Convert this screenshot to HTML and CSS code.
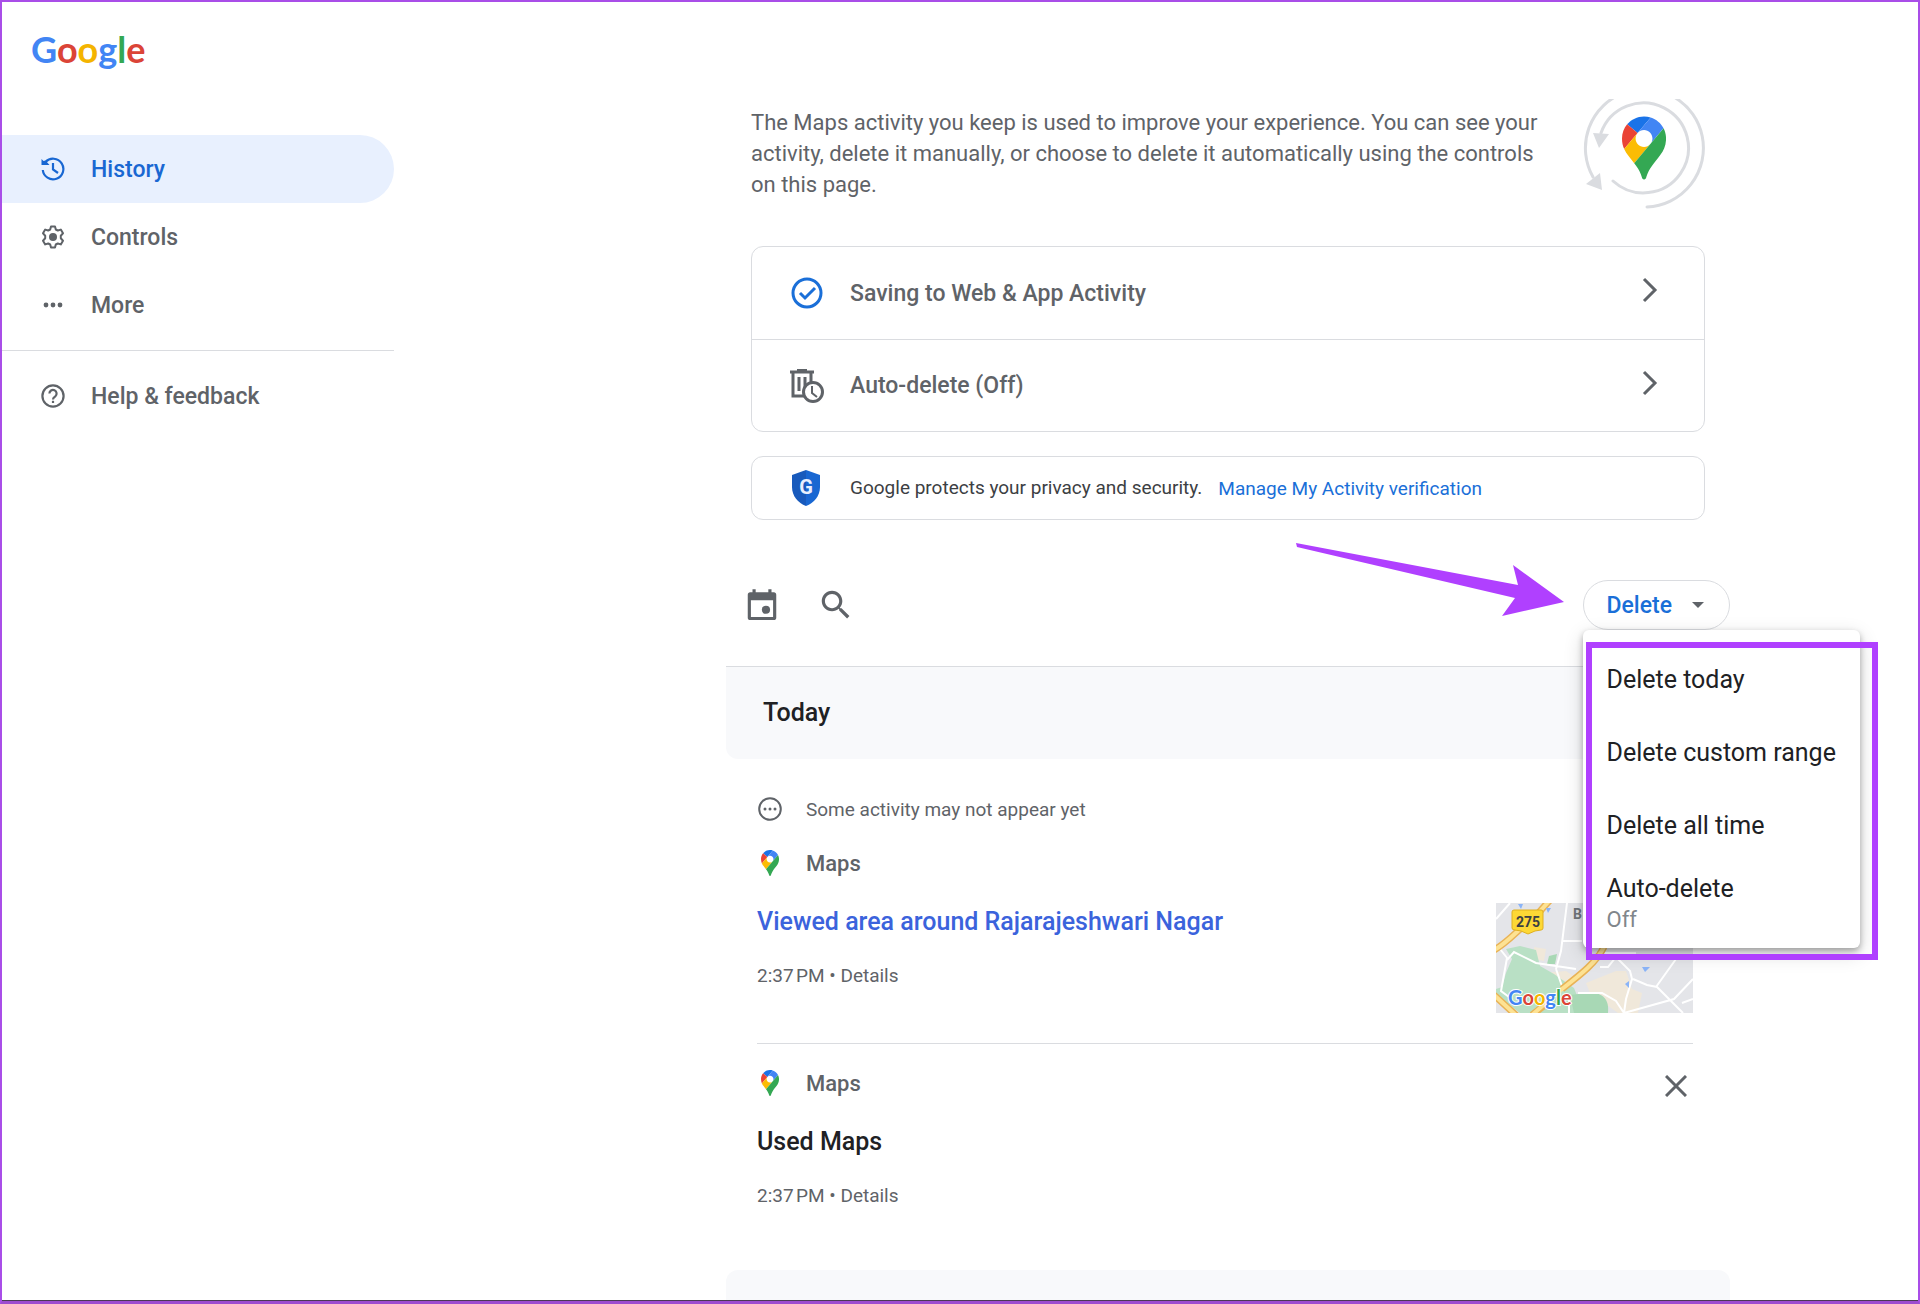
FILE: index.html
```html
<!DOCTYPE html>
<html lang="en">
<head>
  <meta charset="UTF-8">
  <meta name="viewport" content="width=device-width, initial-scale=1">
  <title>Maps activity</title>
  <link rel="stylesheet" href="styles.css">
</head>
<body>
  <!-- shared symbols -->
  <svg class="hidden">
    <symbol id="pin" viewBox="0 0 92.3 132.3">
      <path fill="#1a73e8" d="M60.2 2.2C55.8.8 51 0 46.1 0 32 0 19.3 6.4 10.8 16.5l21.8 18.3L60.2 2.2z"/>
      <path fill="#ea4335" d="M10.8 16.5C4.1 24.5 0 34.9 0 46.1c0 8.7 1.7 15.7 4.6 22l28-33.3-21.8-18.3z"/>
      <path fill="#4285f4" d="M46.2 28.5c9.8 0 17.7 7.9 17.7 17.7 0 4.3-1.6 8.3-4.2 11.4 0 0 13.9-16.6 27.5-32.7-5.6-10.8-15.3-19-27-22.7L32.6 34.8c3.3-3.8 8.1-6.3 13.6-6.3"/>
      <path fill="#fbbc04" d="M46.2 63.8c-9.8 0-17.7-7.9-17.7-17.7 0-4.3 1.5-8.3 4.1-11.3l-28 33.3c4.8 10.6 12.8 19.2 21 29.9l34.1-40.5c-3.3 3.9-8.1 6.3-13.5 6.3"/>
      <path fill="#34a853" d="M59.1 109.2c15.4-24.1 33.3-35 33.3-63 0-7.7-1.9-14.9-5.2-21.3L25.6 98c2.6 3.4 5.3 7.3 7.9 11.3 9.4 14.5 6.8 23.1 12.8 23.1s3.4-8.7 12.8-23.2"/>
    </symbol>
    <symbol id="chevron" viewBox="0 0 16 26">
      <path d="M2 2l11 11L2 24" fill="none" stroke="#5f6368" stroke-width="3"/>
    </symbol>
  </svg>

  <div class="app">
    <aside class="sidebar">
      <a class="logo" href="#" aria-label="Google"><span class="blue">G</span><span class="red">o</span><span class="yellow">o</span><span class="blue">g</span><span class="green">l</span><span class="red">e</span></a>
      <nav>
        <a class="nav-item active" href="#">
          <svg class="nav-icon" viewBox="0 0 24 24" fill="none" stroke="currentColor" stroke-width="2.2">
            <path d="M1.8 13a10.3 10.3 0 1 0 2.7-8L3 6.500"/>
            <path d="M.5 2l2 2 2-.5 4 4.500H.5z" fill="currentColor" stroke="none"/>
            <path d="M12 6v6.500l5 3.500"/>
          </svg>
          History
        </a>
        <a class="nav-item" href="#">
          <svg class="nav-icon" viewBox="0 0 24 24">
            <path fill="none" stroke="currentColor" stroke-width="2" stroke-linejoin="round" d="M10 1.500h4l.8 3 2 1 3-.9 2.200 3.700-2.200 2.400v2.600l2.200 2.400-2.200 3.700-3-.9-2 1-.8 3h-4l-.8-3-2-1-3 .9L2 15.700l2.200-2.400v-2.600L2 8.300l2.200-3.700 3 .9 2-1z"/>
            <circle cx="12" cy="12" r="4" fill="currentColor"/>
          </svg>
          Controls
        </a>
        <a class="nav-item" href="#">
          <svg class="nav-icon" viewBox="0 0 24 24" fill="currentColor">
            <circle cx="5" cy="12" r="2.400"/><circle cx="12" cy="12" r="2.400"/><circle cx="19" cy="12" r="2.400"/>
          </svg>
          More
        </a>
        <hr>
        <a class="nav-item" href="#">
          <svg class="nav-icon" viewBox="0 0 24 24" fill="none" stroke="currentColor" stroke-width="2.200">
            <circle cx="12" cy="12" r="10.600"/>
            <path d="M8.400 9.600a3.600 3.600 0 1 1 5.900 2.700c-1.300 1-2.300 1.600-2.300 3.200"/>
            <path d="M12 16.800v2.200"/>
          </svg>
          Help &amp; feedback
        </a>
      </nav>
    </aside>

    <main class="content">
      <div class="column">
        <section class="intro">
          <p>The Maps activity you keep is used to improve your experience. You can see your activity, delete it manually, or choose to delete it automatically using the controls on this page.</p>
          <svg class="intro-art" viewBox="0 0 122 110">
            <g fill="none" stroke="#dadce0" stroke-width="3" stroke-linecap="round">
              <path d="M64 108A59 59 0 1 0 10 78"/>
              <path d="M30 82A45 45 0 1 0 18 34"/>
            </g>
            <path fill="#dadce0" d="M10 34l16 1-10 14zM3 85l14-11 2 17z"/>
            <use href="#pin" x="39" y="17" width="44" height="64"/>
          </svg>
        </section>

        <section class="card">
          <a class="card-row" href="#">
            <svg class="card-icon" viewBox="0 0 34 34" fill="none" stroke="#1a6fd8" stroke-width="3">
              <circle cx="17" cy="17" r="14"/>
              <path d="M10 17l5 5L25 12"/>
            </svg>
            <span>Saving to Web &amp; App Activity</span>
            <svg class="chevron"><use href="#chevron"/></svg>
          </a>
          <a class="card-row" href="#">
            <svg class="card-icon" viewBox="0 0 34 34" fill="none" stroke="#5f6368" stroke-width="3">
              <path d="M0 3h24M7 1h10"/>
              <path d="M3 3v24h11M21 3v11M9 8v14M15 8v14"/>
              <circle cx="23" cy="23" r="9.500" fill="#fff"/>
              <path d="M22 17v7l5 4" stroke-width="2"/>
            </svg>
            <span>Auto-delete (Off)</span>
            <svg class="chevron"><use href="#chevron"/></svg>
          </a>
        </section>

        <section class="card privacy">
          <svg class="shield" viewBox="0 0 28 36">
            <path fill="#185abc" d="M14 0L0 5v12c0 9 6 16 14 19z"/>
            <path fill="#1967d2" d="M14 0l14 5v12c0 9-6 16-14 19z"/>
            <text x="14" y="24" text-anchor="middle">G</text>
          </svg>
          <span>Google protects your privacy and security.</span>
          <a href="#">Manage My Activity verification</a>
        </section>

        <div class="toolbar">
          <button class="icon-button" aria-label="Filter by date">
            <svg viewBox="0 0 24 24">
              <path fill="#5f6368" d="M6 2h2v2h8V2h2v2h1.500C20.400 4 21 4.600 21 5.500V20c0 .9-.6 1.500-1.500 1.500h-15C3.600 21.500 3 20.900 3 20V5.500C3 4.600 3.600 4 4.500 4H6zM5 9v10.500h14V9z"/>
              <circle cx="14.500" cy="15" r="2.600" fill="#5f6368"/>
            </svg>
          </button>
          <button class="icon-button" aria-label="Search">
            <svg viewBox="0 0 24 24">
              <path fill="#5f6368" d="M15.500 14h-.79l-.28-.27C15.410 12.590 16 11.110 16 9.500 16 5.910 13.090 3 9.500 3S3 5.910 3 9.500 5.910 16 9.500 16c1.610 0 3.090-.59 4.230-1.570l.27.28v.79l5 4.990L20.490 19l-4.990-5zm-6 0C7.010 14 5 11.990 5 9.500S7.010 5 9.500 5 14 7.010 14 9.500 11.990 14 9.500 14z"/>
            </svg>
          </button>

          <div class="delete">
            <button class="delete-button" aria-haspopup="menu" aria-expanded="true">Delete
              <svg class="caret" viewBox="0 0 12 6"><path fill="#5f6368" d="M0 0h12L6 6z"/></svg>
            </button>
            <div class="menu" role="menu">
              <button role="menuitem">Delete today</button>
              <button role="menuitem">Delete custom range</button>
              <button role="menuitem">Delete all time</button>
              <button role="menuitem" class="two-line">Auto-delete<small>Off</small></button>
            </div>
            <div class="highlight"></div>
            <svg class="arrow" viewBox="0 0 268 74">
              <path fill="#b040ff" d="M0 1L222 43 217 23 268 60 206 74 219 56 1 5z"/>
            </svg>
          </div>
        </div>

        <h2 class="day">Today</h2>

        <div class="note">
          <svg class="note-icon" viewBox="0 0 24 24" fill="#5f6368">
            <circle cx="12" cy="12" r="10.800" fill="none" stroke="#5f6368" stroke-width="2"/>
            <circle cx="7" cy="12" r="1.500"/><circle cx="12" cy="12" r="1.500"/><circle cx="17" cy="12" r="1.500"/>
          </svg>
          Some activity may not appear yet
        </div>

        <article class="item">
          <div class="item-text">
            <div class="product"><svg><use href="#pin"/></svg>Maps</div>
            <h3><a href="#">Viewed area around Rajarajeshwari Nagar</a></h3>
            <p>2:37&#8239;PM • <a href="#">Details</a></p>
          </div>
          <svg class="thumb" viewBox="0 0 197 110">
            <rect width="197" height="110" fill="#e4e5e9"/>
            <path fill="#f0e8da" d="M38 44l12 2-2 12-10-2zM48 70l22-2 12 8-14 14-12-6zM90 80l30-12 10 0 6 18 10 4-4 20h-20l-28-20z"/>
            <path fill="#b9e0c5" d="M10 46l14-3 16 4 4 16 14 8 20 14 4 10 14 5-14 10H24L0 92V86l6-2 4-14 6-14z"/>
            <path fill="#a8d8b5" d="M53 53l8-2-2 10-8 0zM74 92l16-2c14-2 24 4 22 20H78z"/>
            <g fill="none" stroke="#fff" stroke-width="2">
              <path d="M4 46l8 10 6-7 22 11 40 6M60 66l5-18 6-48M66 38h20M11 55L5 88l8 6M60 66l7 20M82 90h24l14 8 8 12M104 64l8 0 8-10 14 14 2 8-6 20-2 14M137 76l14 6 10 2 18 18 8 8M160 84l20-28M128 110l50-14 19-20M73 92v18M0 16L14 0M100 50l40 0M186 100l11-4"/>
            </g>
            <g fill="none" stroke="#e9b356" stroke-width="7">
              <path d="M54-3L38 15C26 22 12 40-2 47M108 44C100 60 84 72 66 86M54 98L36 112M-2 92l24 22"/>
            </g>
            <g fill="none" stroke="#fde293" stroke-width="4">
              <path d="M54-3L38 15C26 22 12 40-2 47M108 44C100 60 84 72 66 86L36 112M-2 92l24 22"/>
            </g>
            <path fill="#8ab4f8" d="M22 1h5l-2 5zM146 64h8l-5 5zM129 81l4-3v7zM50 5h5l-3 5z"/>
            <path fill="#fdd835" stroke="#e0b020" d="M18 7h27q2 0 2 2v16q0 2-2 2l-6 1-7 3-7-3-6-1q-3 0-3-2V9q0-2 2-2z"/>
            <text class="road" x="32" y="24" text-anchor="middle">275</text>
            <text class="place" x="77" y="16">B</text>
            <text class="map-logo" x="12" y="102"><tspan class="blue">G</tspan><tspan class="red">o</tspan><tspan class="yellow">o</tspan><tspan class="blue">g</tspan><tspan class="green">l</tspan><tspan class="red">e</tspan></text>
          </svg>
        </article>

        <article class="item">
          <div class="item-text">
            <div class="product"><svg><use href="#pin"/></svg>Maps</div>
            <h3>Used Maps</h3>
            <p>2:37&#8239;PM • <a href="#">Details</a></p>
          </div>
          <button class="close" aria-label="Delete activity item">
            <svg viewBox="0 0 22 22"><path d="M1 1l20 20M21 1L1 21" stroke="#5f6368" stroke-width="3"/></svg>
          </button>
        </article>

        <div class="next-day"></div>
      </div>
    </main>
  </div>
</body>
</html>
```
FILE: styles.css
```css
* { box-sizing: border-box; }
body { margin: 0; min-height: 100vh; display: flex; border: 2px solid #a94ee8; border-bottom: 3px solid #9d4bcf; background: #fff; color: #5f6368; font-family: Roboto, "Liberation Sans", sans-serif; font-size: 19px; }
a { color: inherit; text-decoration: none; }
button { font: inherit; color: inherit; background: none; border: none; padding: 0; cursor: pointer; }
h2, h3, p { margin: 0; font-weight: 500; }
svg { display: block; flex: none; }
.hidden { display: none; }

.blue { color: #4285f4; fill: #4285f4; }
.red { color: #db4437; fill: #db4437; }
.yellow { color: #f4b400; fill: #f4b400; }
.green { color: #34a853; fill: #34a853; }

.app { display: flex; flex: 1; border-bottom: 1px solid #4a3a55; }

/* sidebar */
.sidebar { width: 392px; flex: none; }
.logo { display: block; height: 133px; padding: 22px 0 0 29px; font-family: Lato, sans-serif; font-size: 36px; line-height: 50px; font-weight: 700; }
.nav-item { display: flex; align-items: center; gap: 26px; height: 68px; padding-left: 39px; border-radius: 0 34px 34px 0; font-size: 23px; font-weight: 500; }
.nav-item.active { background: #e8f0fe; color: #1967d2; }
.nav-icon { width: 24px; height: 24px; }
.sidebar hr { margin: 11px 0; border: none; border-top: 1px solid #dadce0; }

/* main column */
.content { flex: 1; display: flex; justify-content: center; padding: 97px 0 0 144px; }
.column { width: 100%; max-width: 1004px; display: flex; flex-direction: column; }
.intro { display: flex; justify-content: space-between; margin: 0 25px 37px; }
.intro p { max-width: 810px; padding-top: 8px; font-size: 22px; line-height: 31px; font-weight: 400; }
.intro-art { width: 122px; height: 110px; }

.card { margin: 0 25px 24px; border: 1px solid #dadce0; border-radius: 12px; }
.card-row { display: flex; align-items: center; height: 92px; padding: 0 46px 0 38px; font-size: 23px; font-weight: 500; }
.card-row + .card-row { border-top: 1px solid #dadce0; }
.card-row span { flex: 1; margin-left: 26px; }
.card-icon { width: 34px; height: 34px; }
.chevron { width: 16px; height: 26px; margin-bottom: 6px; }
.privacy { display: flex; align-items: center; height: 64px; margin-bottom: 0; padding-left: 40px; color: #3c4043; }
.privacy span { margin: 0 16px 2px 30px; }
.privacy a { color: #1a6fd8; }
.shield { width: 28px; height: 36px; }
.shield text { fill: #e8f0fe; font-size: 20px; font-weight: 700; }

.toolbar { display: flex; align-items: center; gap: 36px; padding: 60px 0 36px 17px; border-bottom: 1px solid #dadce0; }
.icon-button svg { width: 38px; height: 38px; }
.delete { position: relative; margin-left: auto; }
.delete-button { display: flex; align-items: center; gap: 20px; height: 50px; padding: 0 25px 0 23px; border: 1px solid #dadce0; border-radius: 25px; color: #1a6fd8; font-size: 23px; font-weight: 500; }
.caret { width: 12px; height: 6px; }
.menu { position: absolute; top: 50px; left: 0; z-index: 1; display: flex; flex-direction: column; width: 277px; padding: 13px 0; border-radius: 6px; background: #fff; box-shadow: 0 3px 6px rgba(0,0,0,.3), 0 6px 20px rgba(0,0,0,.16); }
.menu button { height: 73px; padding-left: 24px; color: #202124; font-size: 25px; line-height: 31px; text-align: left; }
.menu .two-line { padding-top: 10px; }
.menu small { display: block; color: #80868b; font-size: 22px; }
.highlight { position: absolute; top: 62px; left: 3px; z-index: 2; width: 292px; height: 318px; border: 6px solid #b040ff; }
.arrow { position: absolute; top: -38px; right: 166px; width: 268px; height: 74px; }

/* activity list */
.day { height: 92px; padding-left: 37px; border-radius: 0 0 12px 12px; background: #f8f9fb; color: #202124; font-size: 25px; line-height: 92px; }
.note { display: flex; align-items: center; gap: 24px; height: 54px; margin-top: 23px; padding-left: 32px; }
.note-icon { width: 24px; height: 24px; }
.item { display: flex; justify-content: space-between; margin: 0 37px 0 31px; padding-bottom: 30px; }
.item + .item { padding: 12px 0 52px; border-top: 1px solid #dadce0; }
.product { display: flex; align-items: center; height: 54px; font-size: 22px; font-weight: 500; }
.product svg { width: 18px; height: 26px; margin: 0 27px 0 4px; }
.item h3 { color: #202124; font-size: 25px; line-height: 64px; }
.item h3 a { color: #3b63dc; }
.item p { font-weight: 400; line-height: 44px; }
.thumb { width: 197px; height: 110px; margin-top: 67px; }
.road { fill: #3c4043; font-size: 14px; font-weight: 700; }
.place { fill: #70757a; font-size: 14px; font-weight: 700; }
.map-logo { font-family: Lato, sans-serif; font-size: 20px; font-weight: 700; stroke: #fff; stroke-width: 2px; paint-order: stroke; }
.close { align-self: flex-start; margin: 19px 6px 0 0; }
.close svg { width: 22px; height: 22px; }
.next-day { flex: 1; min-height: 30px; border-radius: 12px 12px 0 0; background: #f8f9fb; }
```
